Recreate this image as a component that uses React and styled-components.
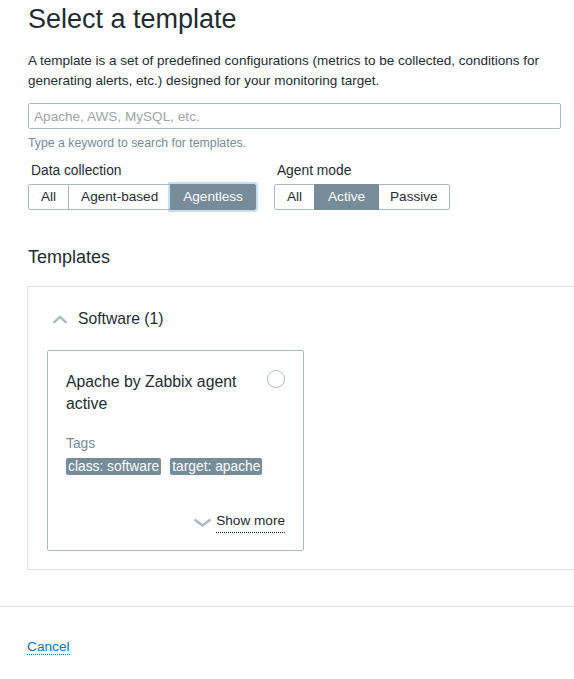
import React from "react";
import styled, { createGlobalStyle } from "styled-components";

const Global = createGlobalStyle`
  html, body { margin: 0; padding: 0; background: #fff; overflow: hidden; }
  body { font-family: "Liberation Sans", Arial, sans-serif; color: #1f2c33; }
  * { box-sizing: border-box; }
`;

const Page = styled.div`
  display: flex;
  flex-direction: column;
  padding-bottom: 20px;
`;

const Content = styled.div`
  display: flex;
  flex-direction: column;
  padding: 3px 13px 0 28px;
`;

const Title = styled.h1`
  margin: 0;
  font-size: 27px;
  line-height: 32px;
  font-weight: normal;
`;

const Description = styled.p`
  margin: 16px 0 0;
  font-size: 13.5px;
  line-height: 20px;
`;

const SearchInput = styled.input`
  margin-top: 12px;
  height: 26px;
  width: 100%;
  border: 1px solid #acbbc2;
  border-radius: 2px;
  padding: 0 5px;
  font-family: inherit;
  font-size: 13.6px;
  color: #1f2c33;
  outline: none;
  &::placeholder { color: #9da5aa; }
`;

const Hint = styled.div`
  margin-top: 6px;
  font-size: 12.3px;
  line-height: 16px;
  color: #768d99;
`;

const FilterRow = styled.div`
  display: flex;
  gap: 18px;
  margin-top: 11px;
`;

const Field = styled.div`
  display: flex;
  flex-direction: column;
  gap: 4px;
`;

const FieldLabel = styled.div`
  font-size: 13.8px;
  line-height: 18px;
  padding-left: 3px;
`;

const Segmented = styled.div`
  display: flex;
`;

const SegButton = styled.button`
  height: 26px;
  padding: 0 ${(p) => p.$pad ?? 12}px;
  margin-left: -1px;
  font-family: inherit;
  font-size: 13.6px;
  line-height: 24px;
  border: 1px solid ${(p) => (p.$active ? "#768d99" : "#acbbc2")};
  background: ${(p) => (p.$active ? "#768d99" : "#fff")};
  color: ${(p) => (p.$active ? "#fff" : "#1f2c33")};
  position: relative;
  z-index: ${(p) => (p.$active ? 1 : 0)};
  box-shadow: ${(p) => (p.$focus ? "0 0 1px 2px rgba(120, 180, 230, 0.45)" : "none")};
  &:first-child { margin-left: 0; border-radius: 2px 0 0 2px; }
  &:last-child { border-radius: 0 2px 2px 0; }
`;

const SectionTitle = styled.h2`
  margin: 35px 0 0;
  font-size: 18px;
  line-height: 24px;
  font-weight: normal;
`;

const Panel = styled.div`
  margin: 17px -40px 0 -1px;
  border: 1px solid #dfe4e7;
  padding: 22px 19px 18px 19px;
  display: flex;
  flex-direction: column;
`;

const GroupHeader = styled.div`
  display: flex;
  align-items: center;
  gap: 10px;
  padding-left: 5px;
  font-size: 15.7px;
  line-height: 20px;
`;

const Card = styled.div`
  margin-top: 21px;
  width: 257px;
  height: 201px;
  border: 1px solid #acbbc2;
  border-radius: 2px;
  padding: 20px 18px 17px 18px;
  display: flex;
  flex-direction: column;
`;

const CardHead = styled.div`
  display: flex;
  justify-content: space-between;
  align-items: flex-start;
  gap: 10px;
`;

const CardTitle = styled.div`
  font-size: 15.8px;
  line-height: 22px;
`;

const Radio = styled.span`
  flex: none;
  width: 18px;
  height: 18px;
  margin-top: -1px;
  border: 1px solid #acbbc2;
  border-radius: 50%;
`;

const TagsLabel = styled.div`
  margin-top: 20px;
  font-size: 13.8px;
  line-height: 18px;
  color: #768d99;
`;

const TagList = styled.div`
  display: flex;
  gap: 9px;
  margin-top: 5px;
`;

const Tag = styled.span`
  background: #768d99;
  color: #fff;
  font-size: 13.8px;
  line-height: 17px;
  padding: 0 2px;
  border-radius: 2px;
`;

const ShowMoreRow = styled.div`
  margin-top: auto;
  display: flex;
  justify-content: flex-end;
  align-items: center;
  gap: 4px;
`;

const ShowMore = styled.span`
  display: inline-block;
  font-size: 13.6px;
  line-height: 18px;
  padding-bottom: 2px;
  border-bottom: 1px dotted #1f2c33;
`;

const Separator = styled.div`
  margin-top: 36px;
  border-top: 1px solid #dfe4e7;
`;

const Footer = styled.div`
  padding: 31px 0 0 27px;
  font-size: 13.7px;
  line-height: 18px;
`;

const CancelLink = styled.span`
  color: #0275b8;
  border-bottom: 1px dotted #0275b8;
`;

const ChevronUp = () => (
  <svg width="16" height="9" viewBox="0 0 16 9">
    <polyline points="1.5,7.8 8,1.8 14.5,7.8" fill="none" stroke="#aab8c0" strokeWidth="2.4" />
  </svg>
);

const ChevronDown = () => (
  <svg width="19" height="9" viewBox="0 0 19 9">
    <polyline points="1.5,1.5 9.5,7.5 17.5,1.5" fill="none" stroke="#aab8c0" strokeWidth="2.4" />
  </svg>
);

export default function App() {
  return (
    <Page>
      <Global />
      <Content>
        <Title>Select a template</Title>
        <Description>
          A template is a set of predefined configurations (metrics to be collected, conditions for
          generating alerts, etc.) designed for your monitoring target.
        </Description>
        <SearchInput placeholder="Apache, AWS, MySQL, etc." />
        <Hint>Type a keyword to search for templates.</Hint>
        <FilterRow>
          <Field>
            <FieldLabel>Data collection</FieldLabel>
            <Segmented>
              <SegButton>All</SegButton>
              <SegButton>Agent-based</SegButton>
              <SegButton $active $focus>Agentless</SegButton>
            </Segmented>
          </Field>
          <Field>
            <FieldLabel>Agent mode</FieldLabel>
            <Segmented>
              <SegButton>All</SegButton>
              <SegButton $active $pad={13}>Active</SegButton>
              <SegButton $pad={11}>Passive</SegButton>
            </Segmented>
          </Field>
        </FilterRow>
        <SectionTitle>Templates</SectionTitle>
        <Panel>
          <GroupHeader>
            <ChevronUp />
            Software (1)
          </GroupHeader>
          <Card>
            <CardHead>
              <CardTitle>Apache by Zabbix agent active</CardTitle>
              <Radio />
            </CardHead>
            <TagsLabel>Tags</TagsLabel>
            <TagList>
              <Tag>class: software</Tag>
              <Tag>target: apache</Tag>
            </TagList>
            <ShowMoreRow>
              <ChevronDown />
              <ShowMore>Show more</ShowMore>
            </ShowMoreRow>
          </Card>
        </Panel>
      </Content>
      <Separator />
      <Footer>
        <CancelLink>Cancel</CancelLink>
      </Footer>
    </Page>
  );
}
